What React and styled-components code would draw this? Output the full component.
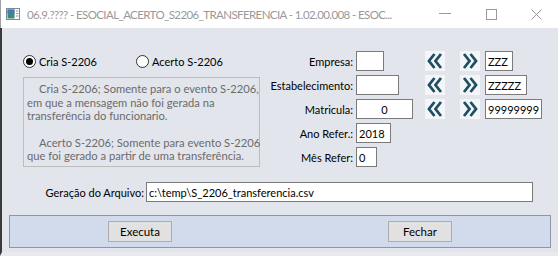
import React, { useState } from "react";
import styled, { createGlobalStyle } from "styled-components";

const GlobalStyle = createGlobalStyle`
  html, body {
    margin: 0;
    padding: 0;
    background: #ffffff;
  }
  body {
    font-family: Lato, "Liberation Sans", Arial, sans-serif;
    font-size: 11px;
    color: #000;
  }
`;

const Window = styled.div`
  width: 558px;
  height: 256px;
  display: flex;
  flex-direction: column;
  overflow: hidden;
`;

const TitleBar = styled.div`
  height: 28px;
  flex: 0 0 28px;
  display: flex;
  align-items: center;
  background: #ffffff;
  border-left: 1px solid #a0a0a0;
  padding-left: 5px;
  color: #999999;
  font-size: 11.5px;
  letter-spacing: -0.6px;
`;

const AppIcon = styled.svg`
  flex: 0 0 auto;
  margin-right: 7px;
`;

const Title = styled.div`
  flex: 1;
  white-space: nowrap;
  overflow: hidden;
`;

const Controls = styled.div`
  display: flex;
  align-items: center;
`;

const CtrlButton = styled.div`
  width: 46px;
  height: 28px;
  display: flex;
  align-items: center;
  justify-content: center;
  &:last-child {
    width: 44px;
  }
`;

const Body = styled.div`
  flex: 1;
  display: flex;
  flex-direction: column;
  background: #e2e5ec;
  border-left: 2px solid #3a3a3a;
  border-bottom: 4px solid #e9eaee;
`;

const TopSection = styled.div`
  display: flex;
  padding: 23px 0 0 21px;
  height: 139px;
  box-sizing: border-box;
`;

const LeftCol = styled.div`
  width: 237px;
  display: flex;
  flex-direction: column;
`;

const RadioRow = styled.div`
  display: flex;
  align-items: center;
  height: 19px;
  margin-bottom: 6px;
  padding-top: 1px;
`;

const RadioLabel = styled.label`
  display: flex;
  align-items: center;
  gap: 3px;
  width: ${(p) => (p.$w ? `${p.$w}px` : "auto")};
  cursor: default;
`;

const RadioCircle = styled.span`
  width: 11px;
  height: 11px;
  border: 1px solid #333333;
  border-radius: 50%;
  background: #ffffff;
  display: flex;
  align-items: center;
  justify-content: center;
  &::after {
    content: "";
    width: 7px;
    height: 7px;
    border-radius: 50%;
    background: ${(p) => (p.$checked ? "#000" : "transparent")};
  }
`;

const InfoBox = styled.div`
  height: 90px;
  box-sizing: border-box;
  border: 1px solid #bdbdbd;
  padding: 4px 3px;
  color: #6b6b6b;
  font-size: 11.2px;
  line-height: 13.5px;
`;

const InfoPara = styled.p`
  margin: 0 0 13px 0;
  text-indent: 12px;
  white-space: nowrap;
`;

const FormGrid = styled.div`
  display: grid;
  grid-template-columns: 93px 69px auto;
  grid-auto-rows: 20px;
  row-gap: 4px;
  align-items: center;
  margin-left: 3px;
`;

const FieldLabel = styled.span`
  text-align: right;
  padding-right: 3px;
  white-space: nowrap;
`;

const TextInput = styled.div`
  width: ${(p) => p.$w}px;
  height: 20px;
  box-sizing: border-box;
  background: #ffffff;
  border: 1px solid #7a7a7a;
  padding: 0 2px;
  display: flex;
  align-items: center;
  justify-content: ${(p) => (p.$center ? "center" : "flex-start")};
  white-space: nowrap;
  overflow: hidden;
`;

const RangeCell = styled.div`
  display: flex;
  align-items: center;
`;

const ArrowButton = styled.div`
  width: 20px;
  height: 20px;
  background: #f3f5f8;
  display: flex;
  align-items: center;
  justify-content: center;
  margin-right: ${(p) => p.$gap}px;
`;

const FileRow = styled.div`
  display: flex;
  align-items: center;
  margin-top: 15px;
`;

const FileLabel = styled.span`
  width: 144px;
  box-sizing: border-box;
  padding-right: 2px;
  text-align: right;
`;

const ButtonPanel = styled.div`
  margin: 13px 0 0 7px;
  width: 542px;
  height: 33px;
  box-sizing: border-box;
  background: #d1dbeb;
  border: 1px solid #8d96a6;
  display: flex;
  align-items: center;
`;

const ActionButton = styled.button`
  width: 64px;
  height: 21px;
  margin-left: ${(p) => p.$left}px;
  background: #e1e1e1;
  border: 1px solid #adadad;
  font-family: Lato, "Liberation Sans", Arial, sans-serif;
  font-size: 11.5px;
  color: #000;
  padding: 0;
`;

const Chevrons = ({ dir }) => (
  <svg width="16" height="16" viewBox="0 0 16 16">
    <g
      fill="none"
      stroke="#1f5060"
      strokeWidth="2.8"
      transform={dir === "right" ? "translate(16,0) scale(-1,1)" : undefined}
    >
      <polyline points="7.5,1 2,8 7.5,15" />
      <polyline points="14,1 8.5,8 14,15" />
    </g>
  </svg>
);

const rangeRows = [
  { label: "Empresa:", w: 28, to: "ZZZ", toW: 28 },
  { label: "Estabelecimento:", w: 43, to: "ZZZZZ", toW: 42 },
  { label: "Matricula:", w: 57, from: "0", to: "99999999", toW: 57 },
];

const App = () => {
  const [mode, setMode] = useState("cria");

  return (
    <>
      <GlobalStyle />
      <Window>
        <TitleBar>
          <AppIcon width="14" height="12" viewBox="0 0 14 12">
            <rect x="0.5" y="0.5" width="13" height="11" fill="#fff" stroke="#7d8b99" />
            <rect x="1.5" y="1.5" width="7" height="9" fill="#3b8a7a" />
            <rect x="1.5" y="1.5" width="7" height="4" fill="#4a78b0" />
            <line x1="10" y1="3" x2="12.5" y2="3" stroke="#8a96a4" />
            <line x1="10" y1="5.5" x2="12.5" y2="5.5" stroke="#8a96a4" />
            <line x1="10" y1="8" x2="12.5" y2="8" stroke="#8a96a4" />
          </AppIcon>
          <Title>
            06.9.???? - ESOCIAL_ACERTO_S2206_TRANSFERENCIA - 1.02.00.008 - ESOC...
          </Title>
          <Controls>
            <CtrlButton>
              <svg width="12" height="2" viewBox="0 0 12 2">
                <line x1="0" y1="0.5" x2="12" y2="0.5" stroke="#9a9a9a" />
              </svg>
            </CtrlButton>
            <CtrlButton>
              <svg width="11" height="11" viewBox="0 0 11 11">
                <rect x="0.5" y="0.5" width="10" height="10" fill="none" stroke="#9a9a9a" />
              </svg>
            </CtrlButton>
            <CtrlButton>
              <svg width="11" height="11" viewBox="0 0 11 11">
                <path d="M0.5 0.5 L10.5 10.5 M10.5 0.5 L0.5 10.5" stroke="#9a9a9a" />
              </svg>
            </CtrlButton>
          </Controls>
        </TitleBar>

        <Body>
          <TopSection>
            <LeftCol>
              <RadioRow>
                <RadioLabel $w={113} onClick={() => setMode("cria")}>
                  <RadioCircle $checked={mode === "cria"} />
                  Cria S-2206
                </RadioLabel>
                <RadioLabel onClick={() => setMode("acerto")}>
                  <RadioCircle $checked={mode === "acerto"} />
                  Acerto S-2206
                </RadioLabel>
              </RadioRow>
              <InfoBox>
                <InfoPara>
                  Cria S-2206; Somente para o evento S-2206,
                  <br />
                  em que a mensagem não foi gerada na
                  <br />
                  transferência do funcionario.
                </InfoPara>
                <InfoPara>
                  Acerto S-2206; Somente para evento S-2206
                  <br />
                  que foi gerado a partir de uma transferência.
                </InfoPara>
              </InfoBox>
            </LeftCol>

            <FormGrid>
              {rangeRows.map((r) => (
                <React.Fragment key={r.label}>
                  <FieldLabel>{r.label}</FieldLabel>
                  <TextInput $w={r.w} $center>
                    {r.from}
                  </TextInput>
                  <RangeCell>
                    <ArrowButton $gap={15}>
                      <Chevrons dir="left" />
                    </ArrowButton>
                    <ArrowButton $gap={5}>
                      <Chevrons dir="right" />
                    </ArrowButton>
                    <TextInput $w={r.toW}>{r.to}</TextInput>
                  </RangeCell>
                </React.Fragment>
              ))}
              <FieldLabel>Ano Refer.:</FieldLabel>
              <TextInput $w={35}>2018</TextInput>
              <span />
              <FieldLabel>Mês Refer:</FieldLabel>
              <TextInput $w={21}>0</TextInput>
              <span />
            </FormGrid>
          </TopSection>

          <FileRow>
            <FileLabel>Geração do Arquivo:</FileLabel>
            <TextInput $w={387}>c:\temp\S_2206_transferencia.csv</TextInput>
          </FileRow>

          <ButtonPanel>
            <ActionButton $left={98}>Executa</ActionButton>
            <ActionButton $left={216}>Fechar</ActionButton>
          </ButtonPanel>
        </Body>
      </Window>
    </>
  );
};

export default App;
